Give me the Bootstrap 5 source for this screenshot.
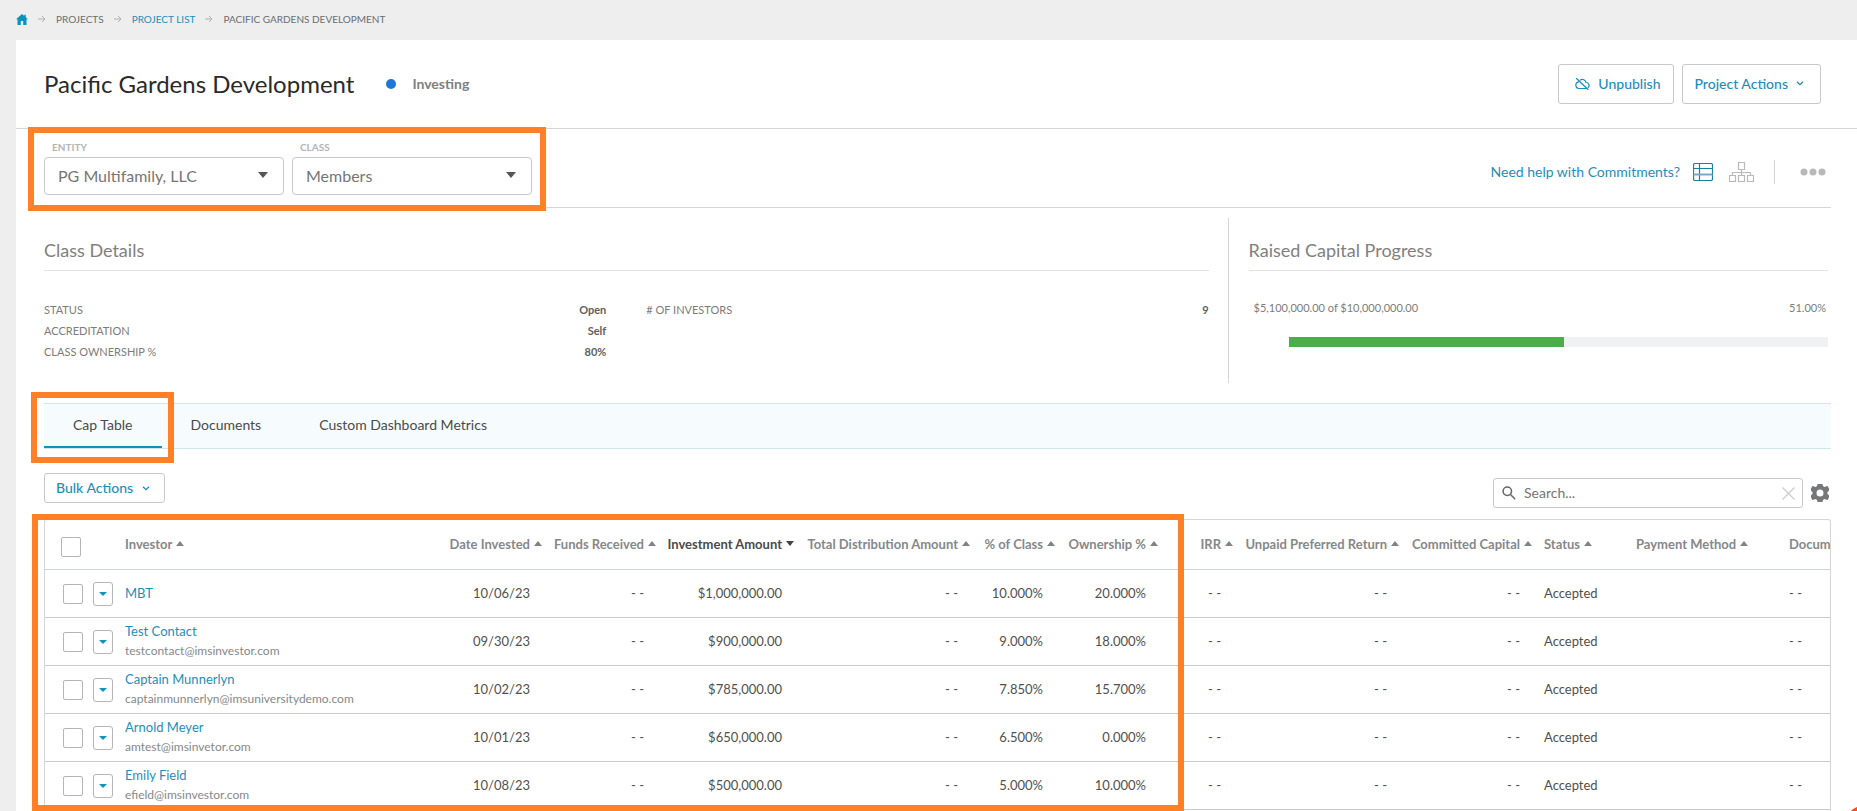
<!DOCTYPE html>
<html lang="en">
<head>
<meta charset="utf-8">
<meta name="viewport" content="width=device-width, initial-scale=1">
<title>Pacific Gardens Development</title>
<link href="https://cdn.jsdelivr.net/npm/bootstrap@5.3.0/dist/css/bootstrap.min.css" rel="stylesheet">
<style>
  :root { --accent: #1f8dbb; --line: #d4d6d8; --edge: #c6c8ca; --mark: #ff8026; }
  body { font-family: Lato, "Open Sans", sans-serif; font-size: 14px; line-height: 20px; color: #505050; background: #eee; }
  a { color: var(--accent); text-decoration: none; }
  svg { display: block; flex: none; }

  .crumbs { height: 40px; padding: 0 16px 2px; font-size: 10px; gap: 10px; color: #6a6d70; }
  .panel { margin-left: 16px; background: #fff; }

  .page-head { min-height: 89px; padding: 0 36px 1px 28px; border-bottom: 1px solid var(--line); }
  .page-head h1 { font-size: 24px; line-height: 32px; color: #2a2a2a; font-weight: 400; }
  .dot { width: 10px; height: 10px; margin: 0 16px 0 32px; background: #1f76d9; }
  .state { color: #808080; font-weight: 700; }
  .btn-line { --bs-btn-color: var(--accent); --bs-btn-border-color: var(--edge); --bs-btn-hover-color: var(--accent); --bs-btn-hover-bg: #f7fdff; --bs-btn-hover-border-color: var(--accent);
    --bs-btn-font-size: 14px; --bs-btn-line-height: 20px; --bs-btn-border-radius: 3px; font-weight: 500; background: #fff; }
  .btn-tall { height: 40px; }

  .sheet { padding: 0 26px 0 28px; }
  .filters { border-bottom: 1px solid var(--line); }
  .filter-set { padding: 12px 0; gap: 8px; }
  .filter-set label { display: block; margin: 0 0 4px 8px; font-size: 10px; line-height: 12px; font-weight: 700; color: #b4b4b4; }
  .filter-set .form-select { width: 240px; height: 38px; padding: 0 30px 0 13px; font-size: 16px; color: #757575; border-color: var(--edge); border-radius: 4px;
    background-image: url("data:image/svg+xml,%3csvg xmlns='http://www.w3.org/2000/svg' viewBox='0 0 10 6'%3e%3cpath fill='%23555' d='M0 0h10L5 6z'/%3e%3c/svg%3e"); background-size: 10px 6px; background-position: right 15px top 14px; }
  .vr-line { width: 1px; height: 24px; background: var(--line); }
  .help-link { margin-right: 13px; }
  .view-set { gap: 16px; margin-right: 20px; }
  .icon-btn { padding: 0; border: 0; background: none; color: #b9b9b9; }

  .marker { position: absolute; border: 6px solid var(--mark); pointer-events: none; z-index: 3; }
  .marker-filters { inset: -2px -14px -4px -16px; }
  .marker-tab { inset: -12px -12px -15px -13px; }
  .marker-table { inset: -5px 647px 0 -12px; }

  .overview { margin: 10px 3px 20px 0; }
  .overview-main { flex: 0 0 66.4%; padding-right: 19px; border-right: 1px solid var(--line); }
  .overview-side { flex: 1; padding-left: 20px; }
  .overview h2 { margin: 0; padding: 20px 0 8px; font-size: 18px; line-height: 24px; font-weight: 400; color: #808080; border-bottom: 1px solid #e2e3e4; }
  .facts { margin: 28px 0 0; padding-bottom: 21px; display: grid; grid-template-columns: 1fr 1fr; column-gap: 40px; font-size: 11px; line-height: 21px; color: #7c7c7c; }
  .facts dl { margin: 0; }
  .facts dt { font-weight: 400; }
  .facts dd { margin: 0; font-weight: 700; color: #606060; }
  .raised { margin-top: 26px; padding: 0 2px 0 5px; font-size: 11px; line-height: 21px; color: #7c7c7c; }
  .raised-bar { height: 10px; margin: 19px 0 0 40px; border-radius: 0; background: #f0f1f3; }
  .raised-bar .progress-bar { background: #4cae48; }

  .tabs { background: #f6fcfe; border: solid #c9e9ef; border-width: 1px 0; }
  .tabs .nav-link { height: 44px; padding: 0 29px; line-height: 42px; color: #4a4a4a; }
  .tabs .nav-link.active { border-bottom: 2px solid #0a93bd; }

  .tools { margin: 24px 0 11px; }
  .bulk { padding: 4px 14px 4px 11px; gap: 9px; }
  .search-set { margin-top: 5px; gap: 8px; padding-right: 2px; }
  .search-box { width: 310px; height: 30px; padding: 0 7px 0 8px; gap: 8px; border: 1px solid var(--edge); border-radius: 3px; }
  .search-box input { flex: 1; min-width: 0; padding: 0; border: 0; outline: 0; font-size: 14px; line-height: 20px; color: #555; }
  .search-box input::placeholder { color: #757575; opacity: 1; }

  .grid-frame { border: 1px solid var(--line); border-bottom: 0; border-radius: 3px 3px 0 0; overflow: hidden; padding-bottom: 1px; }
  .cap { width: calc(100% + 61px); table-layout: fixed; border-collapse: separate; border-spacing: 0; font-size: 13px; white-space: nowrap; }
  .cap th, .cap td { padding: 0 0 2px; border-bottom: 1px solid #c9cbcd; }
  .cap th { height: 50px; color: #85888b; font-weight: 700; border-color: #cdd5dc; }
  .cap td { height: 48px; }
  .cap td.num { text-align: right; padding-right: 12px; }
  .cap th.num > span { justify-content: flex-end; }
  .cap th > span { display: flex; align-items: center; gap: 4px; }
  .cap th > span::after { content: ""; border: solid transparent; border-width: 0 4px 5px; border-bottom-color: #808386; }
  .cap th.sorted { color: #4a4a4a; }
  .cap th.sorted > span::after { border-width: 5px 4px 0; border-top-color: #444; }
  .cap .lead-pad { padding-left: 12px; }
  .cap small { display: block; font-size: 12px; color: #85888b; }
  .cap .form-check-input { display: block; float: none; width: 20px; height: 20px; margin: 3px 0 0 18px; border: 1px solid #b3b5b7; border-radius: 2px; }
  .cap th .form-check-input { margin: 7px 0 0 16px; }
  .row-menu { display: flex; align-items: center; justify-content: center; width: 20px; height: 24px; margin: 2px 0 0 4px; padding: 0; border: 1px solid #b3b5b7; border-radius: 3px; background: #fff; }
  .row-menu::before { content: ""; border: solid transparent; border-width: 4px 4px 0; border-top-color: #0a93bd; }
  .c-check { width: 44px; } .c-menu { width: 36px; } .c-date { width: 150px; } .c-funds { width: 114px; } .c-inv { width: 138px; } .c-dist { width: 176px; }
  .c-class { width: 85px; } .c-own { width: 103px; } .c-irr { width: 75px; } .c-pref { width: 166px; } .c-comm { width: 133px; } .c-status { width: 92px; } .c-pay { width: 153px; } .c-docs { width: 114px; }

  .chat { position: fixed; right: -40px; bottom: -49px; width: 56px; height: 56px; border: 0; border-radius: 50%; background: #f9511d; }
</style>
</head>
<body class="min-vh-100 d-flex flex-column">

<nav class="crumbs d-flex align-items-center" aria-label="Breadcrumb">
  <a href="#" aria-label="Home"><svg width="12" height="11" viewBox="0 0 12 11"><path fill="#0a93bd" d="M6 0 0 5.300h1.500V11h3.300V7h2.400v4h3.300V5.300H12L9.800 3.300V.800H8.300V2z"/></svg></a>
  <svg width="8" height="8" viewBox="0 0 8 8" fill="none" stroke="#b0b0b0"><path d="M0 4h7M4 1l3 3-3 3"/></svg>
  <span>PROJECTS</span>
  <svg width="8" height="8" viewBox="0 0 8 8" fill="none" stroke="#b0b0b0"><path d="M0 4h7M4 1l3 3-3 3"/></svg>
  <a href="#">PROJECT LIST</a>
  <svg width="8" height="8" viewBox="0 0 8 8" fill="none" stroke="#b0b0b0"><path d="M0 4h7M4 1l3 3-3 3"/></svg>
  <span>PACIFIC GARDENS DEVELOPMENT</span>
</nav>

<main class="panel flex-grow-1">
  <header class="page-head d-flex align-items-center">
    <h1 class="mb-0">Pacific Gardens Development</h1>
    <span class="dot rounded-circle"></span>
    <span class="state">Investing</span>
    <div class="ms-auto d-flex gap-2">
      <button type="button" class="btn btn-line btn-tall d-flex align-items-center gap-2 ps-3">
        <svg width="15" height="12" viewBox="0 0 15 12" fill="none" stroke="currentColor" stroke-width="1.200" stroke-linecap="round"><path d="M3.500 3.800A3.400 3.400 0 0 0 3.800 10.500h7.400M5.300 2A3.800 3.800 0 0 1 11 4.500a3 3 0 0 1 2.300 5M1.500.500l11.500 11"/></svg>
        Unpublish</button>
      <button type="button" class="btn btn-line btn-tall d-flex align-items-center gap-2 pe-3">Project Actions
        <svg width="8" height="5" viewBox="0 0 8 5" fill="none" stroke="currentColor" stroke-width="1.300"><path d="m1 .7 3 3 3-3"/></svg></button>
    </div>
  </header>

  <div class="sheet">
    <section class="filters d-flex align-items-center justify-content-between">
      <div class="filter-set position-relative d-flex">
        <div>
          <label for="entity">ENTITY</label>
          <select id="entity" class="form-select"><option>PG Multifamily, LLC</option></select>
        </div>
        <div>
          <label for="class">CLASS</label>
          <select id="class" class="form-select"><option>Members</option></select>
        </div>
        <div class="marker marker-filters"></div>
      </div>
      <div class="d-flex align-items-center pt-2 pe-1">
        <a href="#" class="help-link">Need help with Commitments?</a>
        <div class="view-set d-flex align-items-center">
          <button type="button" class="icon-btn" aria-label="Table view">
            <svg width="20" height="18" viewBox="0 0 20 18" fill="none" stroke="#1a7fa6" stroke-width="1.200"><rect x=".5" y=".5" width="19" height="17" rx="1.500"/><path d="M6.500.500v17M.500 5.500h19"/><path d="M.500 11.500h19" stroke="#7fa6c0" stroke-width="2"/></svg></button>
          <button type="button" class="icon-btn" aria-label="Chart view">
            <svg width="25" height="20" viewBox="0 0 25 20" fill="none" stroke="#b9b9b9" stroke-width="1.200"><path d="M9.500.500h6v7h-6zM.500 13.500h6v6h-6zM9.500 13.500h6v6h-6zM18.500 13.500h6v6h-6zM12.500 7.500v6M3.500 13.500v-3h18v3"/></svg></button>
        </div>
        <span class="vr-line me-4"></span>
        <button type="button" class="icon-btn" aria-label="More options">
          <svg width="28" height="8" viewBox="0 0 28 8" fill="#b9b9b9"><circle cx="5" cy="4" r="3.500"/><circle cx="14" cy="4" r="3.500"/><circle cx="23" cy="4" r="3.500"/></svg></button>
      </div>
    </section>

    <section class="overview d-flex">
      <div class="overview-main">
        <h2>Class Details</h2>
        <div class="facts">
          <dl>
            <div class="d-flex justify-content-between"><dt>STATUS</dt><dd>Open</dd></div>
            <div class="d-flex justify-content-between"><dt>ACCREDITATION</dt><dd>Self</dd></div>
            <div class="d-flex justify-content-between"><dt>CLASS OWNERSHIP %</dt><dd>80%</dd></div>
          </dl>
          <dl>
            <div class="d-flex justify-content-between"><dt># OF INVESTORS</dt><dd>9</dd></div>
          </dl>
        </div>
      </div>
      <div class="overview-side">
        <h2>Raised Capital Progress</h2>
        <div class="raised d-flex justify-content-between"><span>$5,100,000.00 of $10,000,000.00</span><span>51.00%</span></div>
        <div class="progress raised-bar" role="progressbar" aria-label="Raised capital" aria-valuenow="51" aria-valuemin="0" aria-valuemax="100"><div class="progress-bar" style="width: 51%"></div></div>
      </div>
    </section>

    <ul class="nav tabs">
      <li class="nav-item position-relative"><a class="nav-link active" aria-current="page" href="#">Cap Table</a><div class="marker marker-tab"></div></li>
      <li class="nav-item"><a class="nav-link" href="#">Documents</a></li>
      <li class="nav-item"><a class="nav-link" href="#">Custom Dashboard Metrics</a></li>
    </ul>

    <div class="tools d-flex align-items-start justify-content-between">
      <button type="button" class="btn btn-line bulk d-flex align-items-center">Bulk Actions
        <svg width="8" height="5" viewBox="0 0 8 5" fill="none" stroke="currentColor" stroke-width="1.300"><path d="m1 .7 3 3 3-3"/></svg></button>
      <div class="search-set d-flex align-items-center">
        <div class="search-box d-flex align-items-center">
          <svg width="14" height="14" viewBox="0 0 14 14" fill="none" stroke="#666" stroke-width="1.500"><circle cx="5.300" cy="5.300" r="4.200"/><path d="m8.500 8.500 4.700 4.700"/></svg>
          <input type="text" placeholder="Search..." aria-label="Search">
          <button type="button" class="icon-btn" aria-label="Clear search"><svg width="13" height="13" viewBox="0 0 13 13" stroke="#ccc" stroke-width="1.200"><path d="m.5.5 12 12M12.500.500l-12 12"/></svg></button>
        </div>
        <button type="button" class="icon-btn" aria-label="Table settings">
          <svg width="18" height="18" viewBox="3 3 18 18" fill="#757779"><path d="M19.430 12.980c.040-.320.070-.640.070-.980s-.030-.660-.070-.980l2.110-1.650c.190-.150.240-.420.120-.640l-2-3.460c-.120-.220-.390-.300-.610-.220l-2.490 1c-.520-.400-1.080-.730-1.690-.980l-.380-2.650C14.460 2.180 14.250 2 14 2h-4c-.250 0-.460.180-.490.420l-.380 2.650c-.610.250-1.170.590-1.690.980l-2.490-1c-.230-.090-.490 0-.610.220l-2 3.460c-.130.220-.070.490.120.640l2.110 1.650c-.040.320-.070.650-.070.980s.030.660.070.980l-2.110 1.650c-.190.150-.240.420-.120.640l2 3.460c.120.220.390.300.610.220l2.490-1c.520.400 1.080.730 1.690.980l.380 2.650c.030.240.240.420.490.420h4c.250 0 .460-.180.490-.420l.380-2.650c.610-.250 1.170-.590 1.690-.980l2.490 1c.230.090.490 0 .610-.220l2-3.460c.120-.220.070-.490-.120-.640zM12 15.500a3.500 3.500 0 1 1 0-7 3.500 3.500 0 0 1 0 7z"/></svg></button>
      </div>
    </div>

    <div class="position-relative">
      <div class="grid-frame">
        <table class="cap">
          <colgroup><col class="c-check"><col class="c-menu"><col><col class="c-date"><col class="c-funds"><col class="c-inv"><col class="c-dist"><col class="c-class"><col class="c-own"><col class="c-irr"><col class="c-pref"><col class="c-comm"><col class="c-status"><col class="c-pay"><col class="c-docs"></colgroup>
          <thead>
            <tr>
              <th><input class="form-check-input" type="checkbox" aria-label="Select all"></th><th></th>
              <th><span>Investor</span></th><th class="num"><span>Date Invested</span></th><th class="num"><span>Funds Received</span></th>
              <th class="num sorted"><span>Investment Amount</span></th><th class="num"><span>Total Distribution Amount</span></th>
              <th class="num"><span>% of Class</span></th><th class="num"><span>Ownership %</span></th><th class="num"><span>IRR</span></th>
              <th class="num"><span>Unpaid Preferred Return</span></th><th class="num"><span>Committed Capital</span></th>
              <th class="lead-pad"><span>Status</span></th><th class="lead-pad"><span>Payment Method</span></th><th class="lead-pad"><span>Documents</span></th>
            </tr>
          </thead>
          <tbody>
            <tr>
              <td><input class="form-check-input" type="checkbox" aria-label="Select MBT"></td><td><button type="button" class="row-menu" aria-label="MBT actions"></button></td>
              <td><a href="#">MBT</a></td>
              <td class="num">10/06/23</td><td class="num">- -</td><td class="num">$1,000,000.00</td><td class="num">- -</td><td class="num">10.000%</td><td class="num">20.000%</td><td class="num">- -</td><td class="num">- -</td><td class="num">- -</td><td class="lead-pad">Accepted</td><td></td><td class="lead-pad">- -</td>
            </tr>
            <tr>
              <td><input class="form-check-input" type="checkbox" aria-label="Select Test Contact"></td><td><button type="button" class="row-menu" aria-label="Test Contact actions"></button></td>
              <td><a href="#">Test Contact</a><small>testcontact@imsinvestor.com</small></td>
              <td class="num">09/30/23</td><td class="num">- -</td><td class="num">$900,000.00</td><td class="num">- -</td><td class="num">9.000%</td><td class="num">18.000%</td><td class="num">- -</td><td class="num">- -</td><td class="num">- -</td><td class="lead-pad">Accepted</td><td></td><td class="lead-pad">- -</td>
            </tr>
            <tr>
              <td><input class="form-check-input" type="checkbox" aria-label="Select Captain Munnerlyn"></td><td><button type="button" class="row-menu" aria-label="Captain Munnerlyn actions"></button></td>
              <td><a href="#">Captain Munnerlyn</a><small>captainmunnerlyn@imsuniversitydemo.com</small></td>
              <td class="num">10/02/23</td><td class="num">- -</td><td class="num">$785,000.00</td><td class="num">- -</td><td class="num">7.850%</td><td class="num">15.700%</td><td class="num">- -</td><td class="num">- -</td><td class="num">- -</td><td class="lead-pad">Accepted</td><td></td><td class="lead-pad">- -</td>
            </tr>
            <tr>
              <td><input class="form-check-input" type="checkbox" aria-label="Select Arnold Meyer"></td><td><button type="button" class="row-menu" aria-label="Arnold Meyer actions"></button></td>
              <td><a href="#">Arnold Meyer</a><small>amtest@imsinvetor.com</small></td>
              <td class="num">10/01/23</td><td class="num">- -</td><td class="num">$650,000.00</td><td class="num">- -</td><td class="num">6.500%</td><td class="num">0.000%</td><td class="num">- -</td><td class="num">- -</td><td class="num">- -</td><td class="lead-pad">Accepted</td><td></td><td class="lead-pad">- -</td>
            </tr>
            <tr>
              <td><input class="form-check-input" type="checkbox" aria-label="Select Emily Field"></td><td><button type="button" class="row-menu" aria-label="Emily Field actions"></button></td>
              <td><a href="#">Emily Field</a><small>efield@imsinvestor.com</small></td>
              <td class="num">10/08/23</td><td class="num">- -</td><td class="num">$500,000.00</td><td class="num">- -</td><td class="num">5.000%</td><td class="num">10.000%</td><td class="num">- -</td><td class="num">- -</td><td class="num">- -</td><td class="lead-pad">Accepted</td><td></td><td class="lead-pad">- -</td>
            </tr>
          </tbody>
        </table>
      </div>
      <div class="marker marker-table"></div>
    </div>
  </div>
</main>

<button type="button" class="chat" aria-label="Open chat"></button>
<script src="https://cdn.jsdelivr.net/npm/bootstrap@5.3.0/dist/js/bootstrap.bundle.min.js"></script>
</body>
</html>
